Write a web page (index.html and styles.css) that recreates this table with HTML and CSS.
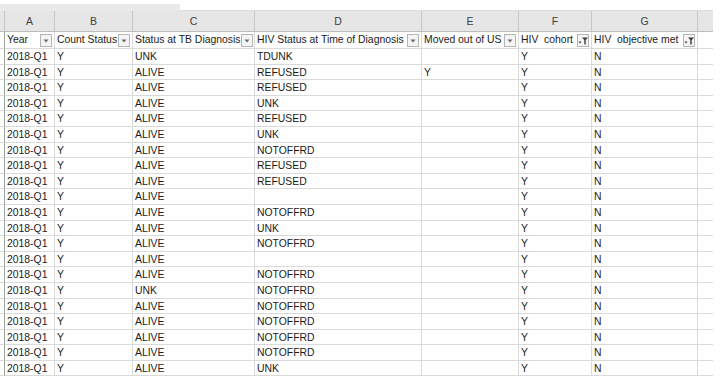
FILE: index.html
```html
<!DOCTYPE html>
<html>
<head>
<meta charset="utf-8">
<link rel="stylesheet" href="styles.css">
</head>
<body>
<div class="sheet">
  <div class="top"><div class="top-left"></div><div class="top-right"></div></div>
  <div class="row letters">
    <span class="rh"></span><span>A</span><span>B</span><span>C</span><span>D</span><span>E</span><span>F</span><span>G</span><span class="x"></span>
  </div>
  <div class="row fields">
    <span class="rh"></span>
    <span class="f"><em>Year</em><i class="btn"><svg viewBox="0 0 12 13" width="12" height="13"><path d="M3.5 5.5h5l-2.5 3z" fill="#6a6a6a"/></svg></i></span>
    <span class="f"><em>Count Status</em><i class="btn"><svg viewBox="0 0 12 13" width="12" height="13"><path d="M3.5 5.5h5l-2.5 3z" fill="#6a6a6a"/></svg></i></span>
    <span class="f"><em>Status at TB Diagnosis</em><i class="btn"><svg viewBox="0 0 12 13" width="12" height="13"><path d="M3.5 5.5h5l-2.5 3z" fill="#6a6a6a"/></svg></i></span>
    <span class="f"><em>HIV Status at Time of Diagnosis</em><i class="btn"><svg viewBox="0 0 12 13" width="12" height="13"><path d="M3.5 5.5h5l-2.5 3z" fill="#6a6a6a"/></svg></i></span>
    <span class="f"><em>Moved out of US</em><i class="btn"><svg viewBox="0 0 12 13" width="12" height="13"><path d="M3.5 5.5h5l-2.5 3z" fill="#6a6a6a"/></svg></i></span>
    <span class="f"><em>HIV  cohort</em><i class="btn"><svg viewBox="0 0 12 13" width="12" height="13"><path d="M1.5 7.5h3l-1.5 2z" fill="#3a3a3a"/><path d="M5 3.5h6l-2.3 2.6v4.4h-1.4v-4.4z" fill="#3a3a3a"/></svg></i></span>
    <span class="f"><em>HIV  objective met</em><i class="btn"><svg viewBox="0 0 12 13" width="12" height="13"><path d="M1.5 7.5h3l-1.5 2z" fill="#3a3a3a"/><path d="M5 3.5h6l-2.3 2.6v4.4h-1.4v-4.4z" fill="#3a3a3a"/></svg></i></span>
    <span class="x"></span>
  </div>
  <div class="row"><span class="rh"></span><span>2018-Q1</span><span>Y</span><span>UNK</span><span>TDUNK</span><span></span><span>Y</span><span>N</span><span class="x"></span></div>
  <div class="row"><span class="rh"></span><span>2018-Q1</span><span>Y</span><span>ALIVE</span><span>REFUSED</span><span>Y</span><span>Y</span><span>N</span><span class="x"></span></div>
  <div class="row"><span class="rh"></span><span>2018-Q1</span><span>Y</span><span>ALIVE</span><span>REFUSED</span><span></span><span>Y</span><span>N</span><span class="x"></span></div>
  <div class="row"><span class="rh"></span><span>2018-Q1</span><span>Y</span><span>ALIVE</span><span>UNK</span><span></span><span>Y</span><span>N</span><span class="x"></span></div>
  <div class="row"><span class="rh"></span><span>2018-Q1</span><span>Y</span><span>ALIVE</span><span>REFUSED</span><span></span><span>Y</span><span>N</span><span class="x"></span></div>
  <div class="row"><span class="rh"></span><span>2018-Q1</span><span>Y</span><span>ALIVE</span><span>UNK</span><span></span><span>Y</span><span>N</span><span class="x"></span></div>
  <div class="row"><span class="rh"></span><span>2018-Q1</span><span>Y</span><span>ALIVE</span><span>NOTOFFRD</span><span></span><span>Y</span><span>N</span><span class="x"></span></div>
  <div class="row"><span class="rh"></span><span>2018-Q1</span><span>Y</span><span>ALIVE</span><span>REFUSED</span><span></span><span>Y</span><span>N</span><span class="x"></span></div>
  <div class="row"><span class="rh"></span><span>2018-Q1</span><span>Y</span><span>ALIVE</span><span>REFUSED</span><span></span><span>Y</span><span>N</span><span class="x"></span></div>
  <div class="row"><span class="rh"></span><span>2018-Q1</span><span>Y</span><span>ALIVE</span><span></span><span></span><span>Y</span><span>N</span><span class="x"></span></div>
  <div class="row"><span class="rh"></span><span>2018-Q1</span><span>Y</span><span>ALIVE</span><span>NOTOFFRD</span><span></span><span>Y</span><span>N</span><span class="x"></span></div>
  <div class="row"><span class="rh"></span><span>2018-Q1</span><span>Y</span><span>ALIVE</span><span>UNK</span><span></span><span>Y</span><span>N</span><span class="x"></span></div>
  <div class="row"><span class="rh"></span><span>2018-Q1</span><span>Y</span><span>ALIVE</span><span>NOTOFFRD</span><span></span><span>Y</span><span>N</span><span class="x"></span></div>
  <div class="row"><span class="rh"></span><span>2018-Q1</span><span>Y</span><span>ALIVE</span><span></span><span></span><span>Y</span><span>N</span><span class="x"></span></div>
  <div class="row"><span class="rh"></span><span>2018-Q1</span><span>Y</span><span>ALIVE</span><span>NOTOFFRD</span><span></span><span>Y</span><span>N</span><span class="x"></span></div>
  <div class="row"><span class="rh"></span><span>2018-Q1</span><span>Y</span><span>UNK</span><span>NOTOFFRD</span><span></span><span>Y</span><span>N</span><span class="x"></span></div>
  <div class="row"><span class="rh"></span><span>2018-Q1</span><span>Y</span><span>ALIVE</span><span>NOTOFFRD</span><span></span><span>Y</span><span>N</span><span class="x"></span></div>
  <div class="row"><span class="rh"></span><span>2018-Q1</span><span>Y</span><span>ALIVE</span><span>NOTOFFRD</span><span></span><span>Y</span><span>N</span><span class="x"></span></div>
  <div class="row"><span class="rh"></span><span>2018-Q1</span><span>Y</span><span>ALIVE</span><span>NOTOFFRD</span><span></span><span>Y</span><span>N</span><span class="x"></span></div>
  <div class="row"><span class="rh"></span><span>2018-Q1</span><span>Y</span><span>ALIVE</span><span>NOTOFFRD</span><span></span><span>Y</span><span>N</span><span class="x"></span></div>
  <div class="row"><span class="rh"></span><span>2018-Q1</span><span>Y</span><span>ALIVE</span><span>UNK</span><span></span><span>Y</span><span>N</span><span class="x"></span></div>
</div>
</body>
</html>
```

FILE: styles.css
```css
html, body {
  margin: 0;
  padding: 0;
  background: #ffffff;
}
body {
  width: 720px;
  height: 378px;
  overflow: hidden;
  font-family: "Liberation Sans", Arial, sans-serif;
  font-size: 10.4px;
  color: #1c1c1c;
}
.sheet {
  width: 713px;
}
.top {
  display: flex;
  height: 11px;
}
.top-left {
  width: 180px;
  margin-top: 4px;
  background: #e9e9e9;
}
.top-right {
  flex: 1;
  background: #ffffff;
  border-bottom: 1px solid #dcdcdc;
}
.row {
  display: grid;
  grid-template-columns: 5px 50px 78px 122px 167px 97px 73px 106px 15px;
  height: 15.6px;
}
.row > span {
  box-sizing: border-box;
  border-right: 1px solid #dadada;
  border-bottom: 1px solid #dadada;
  padding-left: 2px;
  line-height: 15px;
  white-space: pre;
  overflow: hidden;
}
.row > span.rh {
  border-right: 1px solid #9aa89a;
  padding: 0;
}
.row > span.x {
  border-right: none;
}
.letters {
  height: 21px;
  background: #e6e6e6;
}
.letters > span {
  text-align: center;
  padding: 0;
  line-height: 21px;
  color: #404040;
  font-size: 10.5px;
  border-right: 1px solid #c8c8c8;
  border-bottom: 1px solid #bdbdbd;
}
.letters > span.rh {
  border-right: 1px solid #c8c8c8;
}
.fields {
  height: 17px;
}
.fields > span {
  line-height: 16px;
}
.f {
  display: flex;
  align-items: center;
  justify-content: space-between;
}
.f em {
  font-style: normal;
  white-space: pre;
}
.btn {
  display: block;
  width: 12px;
  height: 13px;
  margin-right: 2px;
  box-sizing: border-box;
  border: 1px solid #b5b5b5;
  background: #f4f4f4;
  flex: none;
}
.btn svg {
  display: block;
  margin: -1px;
}
```
